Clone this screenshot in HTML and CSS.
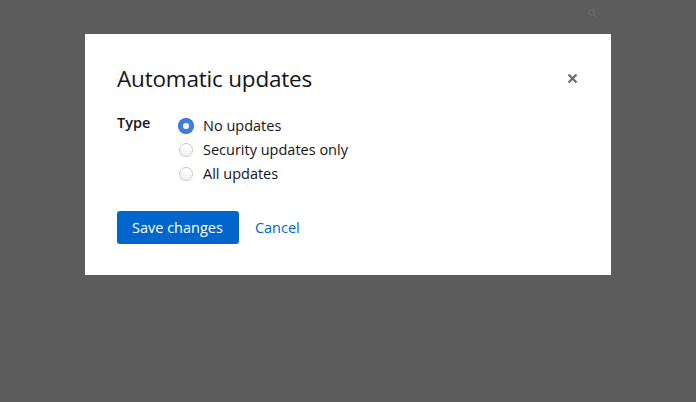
FILE: index.html
```html
<!DOCTYPE html>
<html lang="en">
<head>
  <meta charset="UTF-8">
  <title>Automatic updates</title>
  <link rel="stylesheet" href="styles.css">
</head>
<body>
  <div class="page">
    <!-- Background search icon under the backdrop -->
    <svg class="bg-search" width="9" height="9" viewBox="0 0 10 10">
      <circle cx="4" cy="4" r="3" fill="none" stroke="#6a6a6a" stroke-width="1.3"/>
      <path d="M6.3 6.3 L9 9" stroke="#6a6a6a" stroke-width="1.4"/>
    </svg>

    <div class="modal">
      <div class="modal-header">
        <h1>Automatic updates</h1>
        <button class="close-btn" aria-label="Close">
          <svg width="11" height="11" viewBox="0 0 11 11">
            <path d="M1.5 1.5 L9.5 9.5 M9.5 1.5 L1.5 9.5" stroke="#6a6e73" stroke-width="2.4"/>
          </svg>
        </button>
      </div>

      <form class="form">
        <div class="form-label">Type</div>
        <div class="radio-group">
          <label class="radio"><input type="radio" name="type" checked><span class="dot"></span>No updates</label>
          <label class="radio"><input type="radio" name="type"><span class="dot"></span>Security updates only</label>
          <label class="radio"><input type="radio" name="type"><span class="dot"></span>All updates</label>
        </div>
      </form>

      <div class="modal-footer">
        <button class="btn-primary">Save changes</button>
        <button class="btn-link">Cancel</button>
      </div>
    </div>
  </div>
</body>
</html>
```

FILE: styles.css
```css
* {
  margin: 0;
  padding: 0;
  box-sizing: border-box;
  font-family: 'Open Sans', 'Noto Sans', sans-serif;
}

html, body {
  height: 100%;
}

body {
  background-color: #5c5c5c;
  color: #151515;
}

.page {
  position: relative;
  height: 100%;
  padding-top: 34px;
}

.bg-search {
  position: absolute;
  top: 9px;
  left: 588px;
}

.modal {
  width: 526px;
  margin: 0 auto;
  background: #fff;
  padding: 26px 32px 31px;
}

.modal-header {
  display: flex;
  justify-content: space-between;
  align-items: center;
}

.modal-header h1 {
  font-size: 22.5px;
  font-weight: 400;
  line-height: 38px;
  letter-spacing: -0.2px;
}

.close-btn {
  border: none;
  background: none;
  width: 24px;
  height: 24px;
  display: flex;
  align-items: center;
  justify-content: center;
  margin-right: -5px;
  margin-top: -2px;
  cursor: pointer;
}

.form {
  display: grid;
  grid-template-columns: 62px 1fr;
  margin-top: 16px;
  font-size: 14.5px;
}

.form-label {
  font-weight: 600;
  font-size: 14.5px;
  line-height: 24px;
  margin-top: -3px;
}

.radio-group {
  display: flex;
  flex-direction: column;
}

.radio {
  display: flex;
  align-items: center;
  line-height: 24px;
  color: #151515;
}

.radio input {
  display: none;
}

.dot {
  width: 14px;
  height: 14px;
  border-radius: 50%;
  border: 1px solid #c7c7c7;
  background: linear-gradient(#fff, #f1f1f1);
  margin-right: 10px;
}

.radio input:checked + .dot {
  border: 4px solid #3f7fe0;
  background: #fff;
  box-shadow: 0 0 0 1px #2f6fd0;
}

.modal-footer {
  display: flex;
  align-items: center;
  gap: 16px;
  margin-top: 25px;
}

.btn-primary {
  background-color: #0066cc;
  color: #fff;
  border: none;
  border-radius: 3px;
  height: 33px;
  padding: 0 16px 0 15px;
  font-size: 14.5px;
  cursor: pointer;
}

.btn-link {
  background: none;
  border: none;
  color: #0066cc;
  font-size: 14.5px;
  cursor: pointer;
}
```
